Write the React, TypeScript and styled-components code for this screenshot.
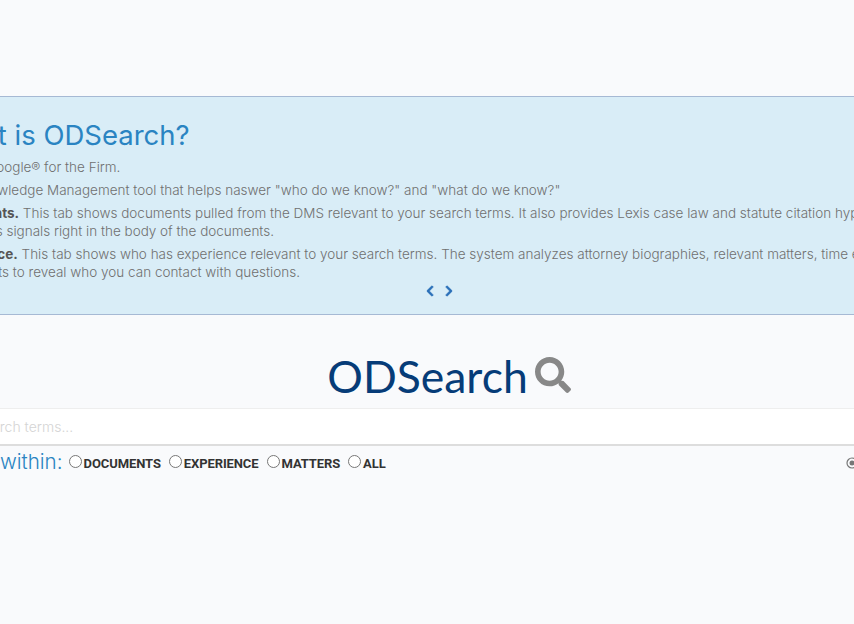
import React from "react"
import styled, { createGlobalStyle } from "styled-components"
import { FaChevronLeft, FaChevronRight, FaSearch } from "react-icons/fa"

const Global = createGlobalStyle`
  html, body { margin: 0; padding: 0; height: 100%; overflow: hidden; background: #f9fafc; }
  body { font-family: "Inter", "Liberation Sans", sans-serif; }
`

const Page = styled.div`
  width: 1000px;
  margin-left: -61px;
  padding-top: 96px;
`

const Banner = styled.section`
  box-sizing: border-box;
  height: 219px;
  padding: 21px 0 0 0;
  background: #d9edf7;
  border-top: 1px solid #a6b9d4;
  border-bottom: 1px solid #a6b9d4;
`

const Title = styled.h2`
  margin: 0 0 6px;
  font-size: 27.5px;
  line-height: 34px;
  font-weight: 400;
  color: #2a84c2;
`

const Para = styled.p`
  margin: 0 0 5px;
  font-size: 13.5px;
  line-height: 18px;
  font-weight: 300;
  color: #707070;
  white-space: nowrap;
  b { font-weight: 700; color: #555; }
`

const Arrows = styled.div`
  display: flex;
  justify-content: center;
  gap: 7px;
  margin-top: -1px;
  color: #2a6fb8;
  font-size: 12px;
  svg { stroke: currentColor; stroke-width: 30px; }
`

const Logo = styled.h1`
  box-sizing: border-box;
  display: flex;
  justify-content: center;
  align-items: center;
  gap: 7px;
  margin: 30px 0 0 20px;
  height: 62px;
  padding-bottom: 2px;
  font-family: "Lato", sans-serif;
  font-size: 44.5px;
  font-weight: 400;
  color: #063c78;
  svg { color: #888; font-size: 36px; }
`

const SearchInput = styled.input`
  display: block;
  box-sizing: border-box;
  width: 100%;
  height: 38px;
  margin-top: 1px;
  padding: 0 12px 0 36px;
  border: 0;
  border-top: 1px solid #eee;
  border-bottom: 2px solid #ddd;
  background: #fff;
  font-family: inherit;
  font-size: 14px;
  outline: none;
  &::placeholder { color: #d4d4d4; font-weight: 300; }
`

const Options = styled.form`
  display: flex;
  align-items: center;
  height: 34px;
  margin-left: -9px;
`

const Within = styled.span`
  font-size: 20.6px;
  font-weight: 300;
  color: #2a84c2;
  margin: -4px 6px 0 -3px;
`

const Option = styled.label`
  display: flex;
  align-items: center;
  margin-right: 8px;
  padding-top: 1px;
  font-family: "Roboto", sans-serif;
  font-size: 13px;
  font-weight: 700;
  letter-spacing: -0.1px;
  color: #333;
  text-transform: uppercase;
  input { margin: -5px 2px 0 0; width: 13px; height: 13px; }
`

const Target = styled.svg`
  width: 12px;
  height: 12px;
  margin-left: auto;
  margin-right: 81px;
`

export default function App() {
  return (
    <Page>
      <Global />
      <Banner>
        <Title>What is ODSearch?</Title>
        <Para>It's like Google® for the Firm.</Para>
        <Para>It's a Knowledge Management tool that helps naswer "who do we know?" and "what do we know?"</Para>
        <Para>
          <b>Documents.</b> This tab shows documents pulled from the DMS relevant to your search terms. It also provides Lexis case law and statute citation hyperlinks
          <br />
          Shepard's signals right in the body of the documents.
        </Para>
        <Para>
          <b>Experience.</b> This tab shows who has experience relevant to your search terms. The system analyzes attorney biographies, relevant matters, time entries
          <br />
          documents to reveal who you can contact with questions.
        </Para>
        <Arrows>
          <FaChevronLeft />
          <FaChevronRight />
        </Arrows>
      </Banner>
      <Logo>
        ODSearch
        <FaSearch />
      </Logo>
      <SearchInput placeholder="Search terms..." />
      <Options>
        <Within>Search within:</Within>
        {["Documents", "Experience", "Matters", "All"].map((name) => (
          <Option key={name}>
            <input type="radio" name="scope" />
            {name}
          </Option>
        ))}
        <Target viewBox="0 0 12 12">
          <circle cx="6" cy="6" r="5" fill="none" stroke="#777" strokeWidth="1.2" />
          <circle cx="6" cy="6" r="2.5" fill="#777" />
        </Target>
      </Options>
    </Page>
  )
}
